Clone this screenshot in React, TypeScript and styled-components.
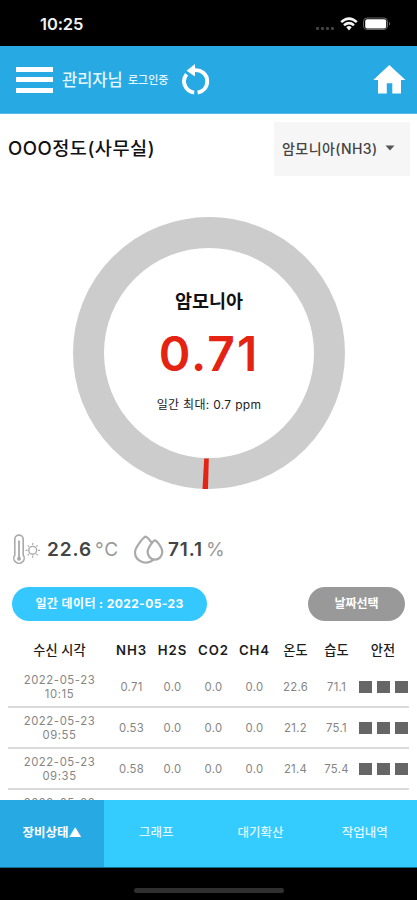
import React from "react";
import styled, { createGlobalStyle } from "styled-components";

const GlobalStyle = createGlobalStyle`
  * { box-sizing: border-box; }
  body { margin: 0; background: #fff; }
  button { border: 0; padding: 0; font: inherit; color: inherit; background: none; }
`;

const Screen = styled.div`
  width: 417px;
  height: 900px;
  overflow: hidden;
  display: flex;
  flex-direction: column;
  background: #fff;
  color: #111;
  font-family: Inter, "Noto Sans CJK KR", sans-serif;
`;

const StatusBar = styled.div`
  height: 46px;
  flex: none;
  background: #000;
  color: #f2f2f2;
  display: flex;
  align-items: center;
  justify-content: space-between;
  padding: 2px 26px 0 40px;
`;

const Clock = styled.span`
  font-size: 16.5px;
  font-weight: 600;
  line-height: 20px;
  letter-spacing: -0.1px;
`;

const Header = styled.header`
  height: 68px;
  flex: none;
  display: flex;
  align-items: center;
  background: #27a9e3;
  border-bottom: 1px solid #55bcea;
  color: #e6f6ff;
  padding: 0 11px 0 16px;
`;

const MenuButton = styled.button`
  width: 37px;
  height: 26px;
  display: flex;
  flex-direction: column;
  justify-content: space-between;
`;

const MenuBar = styled.span`
  height: 5px;
  background: #fff;
`;

const UserName = styled.span`
  margin-left: 9px;
  width: 66px;
  font-size: 16.5px;
  font-weight: 500;
  line-height: 24px;
  white-space: nowrap;
`;

const LoginState = styled.span`
  width: 54px;
  font-size: 11px;
  font-weight: 500;
  line-height: 24px;
  white-space: nowrap;
`;

const IconButton = styled.button<{ $push?: boolean }>`
  display: flex;
  margin-left: ${(p) => (p.$push ? "auto" : "0")};
`;

const TitleRow = styled.div`
  height: 62px;
  flex: none;
  display: flex;
  justify-content: space-between;
  padding: 8px 7px 0 8px;
`;

const SiteName = styled.h1`
  margin: 0;
  font-size: 18.6px;
  font-weight: 500;
  line-height: 52px;
  letter-spacing: 0.5px;
  white-space: nowrap;
`;

const GasSelect = styled.button`
  width: 136px;
  height: 54px;
  display: flex;
  align-items: center;
  justify-content: space-between;
  padding: 0 15px 2px 8px;
  background: #f6f6f6;
  color: #444;
  font-size: 14px;
  font-weight: 500;
  letter-spacing: 0.45px;
  white-space: nowrap;
`;

const GaugeArea = styled.section`
  height: 355px;
  flex: none;
  padding: 41px 0 0 73px;
`;

const Gauge = styled.div`
  width: 272px;
  height: 272px;
  display: grid;
`;

const Ring = styled.svg`
  grid-area: 1 / 1;
`;

const Reading = styled.div`
  grid-area: 1 / 1;
  display: flex;
  flex-direction: column;
  align-items: center;
  padding-top: 70px;
  white-space: nowrap;
`;

const GasName = styled.span`
  font-size: 18.5px;
  font-weight: 700;
  line-height: 28px;
`;

const GasValue = styled.span`
  margin-top: 9px;
  font-size: 48px;
  font-weight: 600;
  line-height: 60px;
  letter-spacing: 2px;
  color: #e42313;
`;

const DailyMax = styled.span`
  margin-top: 11px;
  font-size: 12px;
  line-height: 20px;
  letter-spacing: 0.3px;
  color: #222;
`;

const Climate = styled.section`
  height: 44px;
  flex: none;
  display: flex;
  align-items: center;
  padding: 0 0 6px 12px;
`;

const ClimateValue = styled.span<{ $width: number }>`
  width: ${(p) => p.$width}px;
  font-size: 19px;
  font-weight: 600;
  line-height: 24px;
  letter-spacing: 0.9px;
  color: #444;
  white-space: nowrap;
`;

const Unit = styled.span`
  margin-left: 3px;
  font-weight: 400;
  color: #999;
`;

const Actions = styled.div`
  height: 50px;
  flex: none;
  display: flex;
  justify-content: space-between;
  align-items: flex-start;
  padding: 12px 12px 0;
`;

const Pill = styled.button<{ $width: number; $color: string }>`
  width: ${(p) => p.$width}px;
  height: 34px;
  border-radius: 17px;
  background: ${(p) => p.$color};
  color: #fff;
  font-size: 12px;
  font-weight: 700;
  line-height: 34px;
  letter-spacing: ${(p) => (p.$width > 100 ? 0.4 : 0)}px;
  text-align: center;
  white-space: nowrap;
`;

const TableArea = styled.section`
  flex: 1;
  min-height: 0;
  overflow: hidden;
  padding: 4px 8px 0;
`;

const Row = styled.div<{ $head?: boolean }>`
  display: grid;
  grid-template-columns: 103px repeat(6, 41px) 52px;
  align-items: center;
  text-align: center;
  height: ${(p) => (p.$head ? 38 : 41)}px;
  padding-top: ${(p) => (p.$head ? 3 : 1)}px;
  border-bottom: ${(p) => (p.$head ? "0" : "2px solid #dadada")};
  color: ${(p) => (p.$head ? "#1c1c1c" : "#858585")};
  font-size: ${(p) => (p.$head ? 13.2 : 11.3)}px;
  font-weight: ${(p) => (p.$head ? 500 : 400)};
  line-height: ${(p) => (p.$head ? "20px" : "14.5px")};
  letter-spacing: ${(p) => (p.$head ? 0.1 : 0.3)}px;
  white-space: nowrap;
`;

const Time = styled.span`
  white-space: pre-line;
  letter-spacing: 0.6px;
`;

const GasHead = styled.span`
  font-weight: 600;
  letter-spacing: 0.9px;
`;

const Safety = styled.span`
  display: flex;
  justify-content: center;
  gap: 5px;
  margin-right: -1px;
`;

const Block = styled.i`
  width: 12.7px;
  height: 12.7px;
  flex: none;
  background: #666;
`;

const TabBar = styled.nav`
  height: 68px;
  flex: none;
  display: grid;
  grid-template-columns: repeat(4, 1fr);
  background: #34cbff;
  border-bottom: 1px solid #156f91;
`;

const Tab = styled.button<{ $active?: boolean }>`
  background: ${(p) => (p.$active ? "#27a9e3" : "transparent")};
  color: ${(p) => (p.$active ? "#fff" : "#e0f7ff")};
  font-size: 12.5px;
  font-weight: ${(p) => (p.$active ? 700 : 500)};
  padding-bottom: 5px;
  white-space: nowrap;
`;

const HomeArea = styled.footer`
  height: 32px;
  flex: none;
  display: flex;
  justify-content: center;
  align-items: center;
  padding-top: 12px;
  background: #000;
`;

const HomeIndicator = styled.div`
  width: 150px;
  height: 5px;
  border-radius: 3px;
  background: #303030;
`;

const gases = ["NH3", "H2S", "CO2", "CH4"];
const records = [
  { time: "2022-05-23\n10:15", values: ["0.71", "0.0", "0.0", "0.0", "22.6", "71.1"] },
  { time: "2022-05-23\n09:55", values: ["0.53", "0.0", "0.0", "0.0", "21.2", "75.1"] },
  { time: "2022-05-23\n09:35", values: ["0.58", "0.0", "0.0", "0.0", "21.4", "75.4"] },
];

function StatusIcons() {
  return (
    <svg width="76" height="16" viewBox="0 0 76 16">
      <g fill="#444">
        <rect x="1" y="11" width="3" height="3" rx="1" />
        <rect x="6" y="11" width="3" height="3" rx="1" />
        <rect x="11" y="11" width="3" height="3" rx="1" />
        <rect x="16" y="11" width="3" height="3" rx="1" />
      </g>
      <g fill="none" stroke="#f4f4f4" strokeWidth="2.5">
        <path d="M26.2 6.2Q34 -.9 41.8 6.2" />
        <path d="M29 9.2Q34 5 39 9.2" />
      </g>
      <path d="M31.3 11.2Q34 8.8 36.7 11.2L34 14.4Z" fill="#f4f4f4" />
      <rect x="48.5" y="2" width="24" height="11.5" rx="3.5" fill="none" stroke="#666" />
      <rect x="50.2" y="3.2" width="21" height="9.2" rx="2" fill="#fff" />
      <path d="M74 5.8Q76 7.8 74 9.8Z" fill="#777" />
    </svg>
  );
}

function RefreshIcon() {
  return (
    <svg width="28" height="34" viewBox="0 0 28 34">
      <g fill="none" stroke="#fff" strokeWidth="3.9">
        <path d="M11 7.4C19.5 6 25.2 11.6 25.2 18.2 25.2 24 21.2 28.4 15.6 29.6" />
        <path d="M4.6 11.2A11.6 11.4 0 0 0 12.2 29.6" />
      </g>
      <path d="M4.6 7.8 13 1V13.6Z" fill="#fff" />
    </svg>
  );
}

function HomeIcon() {
  return (
    <svg width="33" height="29" viewBox="0 0 33 29">
      <path d="M16.3 0 32.5 15H28V28.5H19.3V18.3H13.8V28.5H5V15H.3Z" fill="#fff" />
    </svg>
  );
}

function ThermometerIcon() {
  return (
    <svg width="35" height="32" viewBox="0 0 35 32" fill="none" stroke="#aaa">
      <path d="M2.8 21V5.3a4.2 4.2 0 0 1 8.4 0V21a5.2 5.2 0 1 1-8.4 0Z" strokeWidth="1.6" />
      <path d="M7 6.5V23" strokeWidth="1.8" />
      <circle cx="7" cy="24.8" r="2" fill="#aaa" stroke="none" />
      <circle cx="20.7" cy="16.3" r="3.9" strokeWidth="1.4" />
      <path d="M20.7 9v2M20.7 21.6v2.2M13.5 16.3h2M26 16.3h2M15.7 11.3l1.4 1.4M24.3 19.9l1.4 1.4M15.7 21.3l1.4-1.4M24.3 12.7l1.4-1.4" strokeWidth="1.2" />
    </svg>
  );
}

function DropsIcon() {
  return (
    <svg width="35" height="32" viewBox="0 0 35 32" fill="none" stroke="#aaa" strokeWidth="2.2">
      <path d="M18.5 8.5C16 5.2 13.4 2.6 12.6 2.6 10.5 3.5 2 13 2 18.5a11 10 0 0 0 18.6 7.2" />
      <path d="M21.8 6.4c-1.3.4-7.2 6.7-7.2 11.7a7.3 7.4 0 0 0 14.7 0c0-5-6-11.7-7.5-11.7Z" />
    </svg>
  );
}

export default function App() {
  return (
    <Screen>
      <GlobalStyle />
      <StatusBar>
        <Clock>10:25</Clock>
        <StatusIcons />
      </StatusBar>
      <Header>
        <MenuButton aria-label="메뉴">
          <MenuBar />
          <MenuBar />
          <MenuBar />
        </MenuButton>
        <UserName>관리자님</UserName>
        <LoginState>로그인중</LoginState>
        <IconButton>
          <RefreshIcon />
        </IconButton>
        <IconButton $push>
          <HomeIcon />
        </IconButton>
      </Header>
      <TitleRow>
        <SiteName>OOO정도(사무실)</SiteName>
        <GasSelect>
          암모니아(NH3)
          <svg width="10" height="6" viewBox="0 0 10 6">
            <path d="M.5.5h9L5 5.5Z" fill="#555" />
          </svg>
        </GasSelect>
      </TitleRow>
      <GaugeArea>
        <Gauge>
          <Ring width="272" height="272" viewBox="0 0 272 272">
            <circle cx="136" cy="136" r="120.5" fill="none" stroke="#ccc" strokeWidth="31" />
            <path d="M131.2 241.5H135.8L135 272H129.5Z" fill="#e42313" />
          </Ring>
          <Reading>
            <GasName>암모니아</GasName>
            <GasValue>0.71</GasValue>
            <DailyMax>일간 최대: 0.7 ppm</DailyMax>
          </Reading>
        </Gauge>
      </GaugeArea>
      <Climate>
        <ThermometerIcon />
        <ClimateValue $width={86}>
          22.6<Unit>°C</Unit>
        </ClimateValue>
        <DropsIcon />
        <ClimateValue $width={70}>
          71.1<Unit>%</Unit>
        </ClimateValue>
      </Climate>
      <Actions>
        <Pill $width={195} $color="#34c8ff">일간 데이터 : 2022-05-23</Pill>
        <Pill $width={97} $color="#999">날짜선택</Pill>
      </Actions>
      <TableArea>
        <Row $head>
          <span>수신 시각</span>
          {gases.map((gas) => (
            <GasHead key={gas}>{gas}</GasHead>
          ))}
          <span>온도</span>
          <span>습도</span>
          <span>안전</span>
        </Row>
        {records.map((record) => (
          <Row key={record.time}>
            <Time>{record.time}</Time>
            {record.values.map((value, i) => (
              <span key={i}>{value}</span>
            ))}
            <Safety>
              <Block />
              <Block />
              <Block />
            </Safety>
          </Row>
        ))}
        <Row>
          <Time>{"2022-05-23\n09:15"}</Time>
        </Row>
      </TableArea>
      <TabBar>
        <Tab $active>장비상태▲</Tab>
        <Tab>그래프</Tab>
        <Tab>대기확산</Tab>
        <Tab>작업내역</Tab>
      </TabBar>
      <HomeArea>
        <HomeIndicator />
      </HomeArea>
    </Screen>
  );
}
